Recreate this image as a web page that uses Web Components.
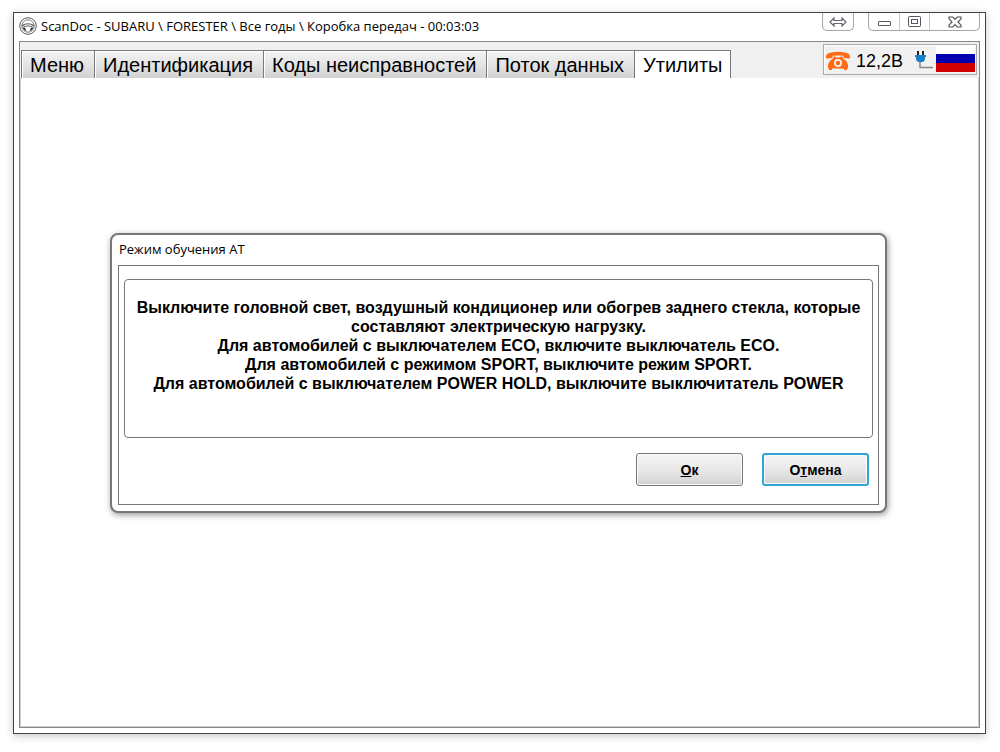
<!DOCTYPE html>
<html lang="ru">
<head>
<meta charset="utf-8">
<title>ScanDoc</title>
<style>
html,body{height:100%}
body{margin:0;background:#fff;color:#000;font-family:"Liberation Sans",Arial,sans-serif}
</style>
</head>
<body>
<scan-app></scan-app>
<script>
function define(name, html, setup) {
  const template = document.createElement('template');
  template.innerHTML = html;
  customElements.define(name, class extends HTMLElement {
    connectedCallback() {
      if (this.shadowRoot) return;
      this.attachShadow({mode: 'open'}).append(template.content.cloneNode(true));
      if (setup) setup(this, this.shadowRoot);
    }
  });
}

define('title-bar', `
<style>
:host{display:flex;align-items:flex-start;justify-content:space-between;height:28px}
.title{display:flex;align-items:center;gap:4px;padding:4px 0 0;font:13px/18px "Open Sans","Noto Sans",sans-serif;white-space:nowrap}
h1{margin:0;font:inherit}
.controls{display:flex;gap:14px}
.group{display:flex;border:1px solid #a6a6ae;border-top:0;border-radius:0 0 5px 5px;height:17px;box-shadow:inset 0 0 1px #ccc}
button{margin:0;padding:0;border:0;background:none;width:30px;display:grid;place-items:center}
button + button{border-left:1px solid #c8c8cc}
button.close{width:50px}
</style>
<div class="title">
<svg width="18" height="18" viewBox="0 0 18 18" fill="none" stroke="#5a5a5a"><circle cx="9" cy="9" r="8.300"/><circle cx="9" cy="9" r="6.200" stroke="#777"/><path d="M3 8.500 Q9 5 15 8.500 L11.500 9.500 Q9 8 6.500 9.500Z" fill="#fff"/><path d="M3.500 10.500 L5.800 10.500 L7.500 14.300 Q4.500 13.500 3.500 10.500ZM14.500 10.500 L12.200 10.500 L10.500 14.300 Q13.500 13.500 14.500 10.500Z" fill="#333" stroke="none"/></svg>
<h1><slot></slot></h1>
</div>
<div class="controls">
<div class="group"><button aria-label="Развернуть по ширине"><svg width="18" height="10" viewBox="0 0 18 10" fill="#fff" stroke="#66666e" stroke-width="1.200"><path d="M1 5 L5 1 V3.500 H13 V1 L17 5 L13 9 V6.500 H5 V9Z"/></svg></button></div>
<div class="group">
<button aria-label="Свернуть"><svg width="14" height="14" viewBox="0 0 14 14" fill="#fff" stroke="#55555d"><rect x="1.500" y="6.500" width="12" height="4" rx=".5"/></svg></button>
<button aria-label="Развернуть"><svg width="14" height="12" viewBox="0 0 14 12" fill="#fff" stroke="#55555d"><rect x=".5" y=".5" width="12" height="10" rx=".8"/><rect x="3.500" y="3.500" width="6" height="4"/></svg></button>
<button class="close" aria-label="Закрыть"><svg width="14" height="12" viewBox="0 0 14 12" fill="#fff" stroke="#55555d" stroke-width="1.200"><path d="M1 1 H4.800 L7 3.300 L9.200 1 H13 V2.800 L10 6 L13 9.200 V11 H9.200 L7 8.700 L4.800 11 H1 V9.200 L4 6 L1 2.800Z"/></svg></button>
</div>
</div>`);

define('tab-button', `
<style>
:host{display:block}
button{margin:0;border:1px solid #77777e;border-width:1px 1px 0;border-right-width:0;box-shadow:inset 1px 1px #fff;background:linear-gradient(#f3f3f3,#e6e6e6 45%,#d2d2d2);height:28px;padding:0 10px 0 8px;font:20px/26px "Liberation Sans",Arial,sans-serif;color:#000;white-space:nowrap}
:host([selected]) button{background:#fff;border-right-width:1px;padding-right:7px}
</style>
<button role="tab"><slot></slot></button>`, (host, root) => {
  root.querySelector('button').setAttribute('aria-selected', host.hasAttribute('selected'));
});

define('status-panel', `
<style>
:host{display:flex;align-items:center;height:29px;border:1px solid #aaa;padding:0 1px;background:#f1f1f1;font-size:18px;line-height:26px;box-shadow:inset 1px 1px #fff;white-space:nowrap}
.volts{margin-left:5px;padding-top:3px}
.phone{margin-top:2px}
.plug{margin:0 2px 0 11px}
.flag{align-self:flex-start}
</style>
<svg class="phone" width="26" height="20" viewBox="0 0 26 20" fill="#ff6a13"><path d="M1 7.500 Q.5 2.500 5 1.700 Q13 0 21 1.700 Q25.500 2.500 25 7.500 L18.500 7 V4.800 Q13 4 7.500 4.800 V7Z"/><path fill-rule="evenodd" d="M8.500 5.500 H10.500 V6.500 H15.500 V5.500 H17.500 L18 7.500 Q22 9.500 23 14 V17.500 H3 V14 Q4 9.500 8 7.500ZM13 8 A4 4 0 1 0 13 16 A4 4 0 1 0 13 8Z"/><circle cx="13" cy="12" r="2.200"/><path d="M4 17 H7 V19 H4ZM19 17 H22 V19 H19Z"/></svg>
<span class="volts">12,2В</span>
<svg class="plug" width="20" height="20" viewBox="0 0 20 20"><path d="M4 1 V6 M9 1 V6" stroke="#222" stroke-width="2"/><path d="M1 5 H12 V7 H11 V9 Q11 11.500 8.500 12 H4.500 Q2 11.500 2 9 V7 H1Z" fill="#1680c4"/><path d="M6 12 V17.500 H19" fill="none" stroke="#888" stroke-width="1.500"/></svg>
<svg class="flag" width="39" height="27" viewBox="0 0 39 27" role="img" aria-label="Русский"><path fill="#fff" d="M0 1H39V9H0Z"/><path fill="#0000b0" d="M0 9H39V18H0Z"/><path fill="#d00000" d="M0 18H39V27H0Z"/></svg>`);

define('push-button', `
<style>
:host{display:block}
button{box-sizing:border-box;width:107px;height:33px;margin:0;padding:0;border:1px solid #77777b;border-radius:3px;background:linear-gradient(#f4f4f4,#e9e9e9 50%,#d2d2d2);box-shadow:inset 0 0 0 1px #fafafa;font:bold 14px/20px "Liberation Sans",Arial,sans-serif;color:#000}
:host([primary]) button{border:2px solid #31a5d4}
</style>
<button type="button"><slot></slot></button>`);

define('message-dialog', `
<style>
:host{display:block;box-sizing:border-box;border:2px solid #777;border-radius:8px;background:#fff;padding:0 6px 6px;box-shadow:1px 2px 6px rgba(0,0,0,.4)}
h2{margin:0;padding:5px 0 6px 1px;font:13px/19px "Open Sans","Noto Sans",sans-serif}
.body{border:1px solid #77777b;padding:13px 5px 18px}
.message{box-sizing:border-box;min-height:159px;border:1px solid #77777b;border-radius:4px;padding:18px 4px;text-align:center;font-weight:bold;font-size:16px;line-height:19px}
.actions{display:flex;justify-content:flex-end;gap:19px;padding:15px 4px 0 0}
</style>
<h2><slot name="title"></slot></h2>
<div class="body">
<div class="message"><slot></slot></div>
<div class="actions"><slot name="actions"></slot></div>
</div>`, (host) => host.setAttribute('role', 'dialog'));

define('scan-app', `
<style>
:host{display:flex;box-sizing:border-box;height:100vh;padding:12px 14px 18px 13px}
.window{flex:1;position:relative;display:flex;flex-direction:column;border:1px solid #424242;padding:0 5px 5px;box-shadow:0 2px 8px rgba(0,0,0,.22)}
.frame{flex:1;border:1px solid #888;box-shadow:inset 0 0 0 1px #ccc}
.bar{display:flex;justify-content:space-between;background:#f0f0f0;padding:2px 2px 0 1px;height:34px}
nav{display:flex;align-items:flex-end}
.overlay{position:absolute;inset:0 2px 0 0;display:grid;place-items:center}
message-dialog{width:calc(100% - 192px)}
p{margin:0}
</style>
<div class="window">
<title-bar>ScanDoc - SUBARU \\ FORESTER \\ Все годы \\ Коробка передач - 00:03:03</title-bar>
<main class="frame">
<div class="bar">
<nav role="tablist"><tab-button>Меню</tab-button><tab-button>Идентификация</tab-button><tab-button>Коды неисправностей</tab-button><tab-button>Поток данных</tab-button><tab-button selected>Утилиты</tab-button></nav>
<status-panel></status-panel>
</div>
</main>
<div class="overlay">
<message-dialog>
<span slot="title">Режим обучения АТ</span>
<p>Выключите головной свет, воздушный кондиционер или обогрев заднего стекла, которые составляют электрическую нагрузку.</p>
<p>Для автомобилей с выключателем ECO, включите выключатель ECO.</p>
<p>Для автомобилей с режимом SPORT, выключите режим SPORT.</p>
<p>Для автомобилей с выключателем POWER HOLD, выключите выключитатель POWER</p>
<push-button slot="actions"><u>О</u>к</push-button>
<push-button slot="actions" primary>О<u>т</u>мена</push-button>
</message-dialog>
</div>
</div>`);
</script>
</body>
</html>
